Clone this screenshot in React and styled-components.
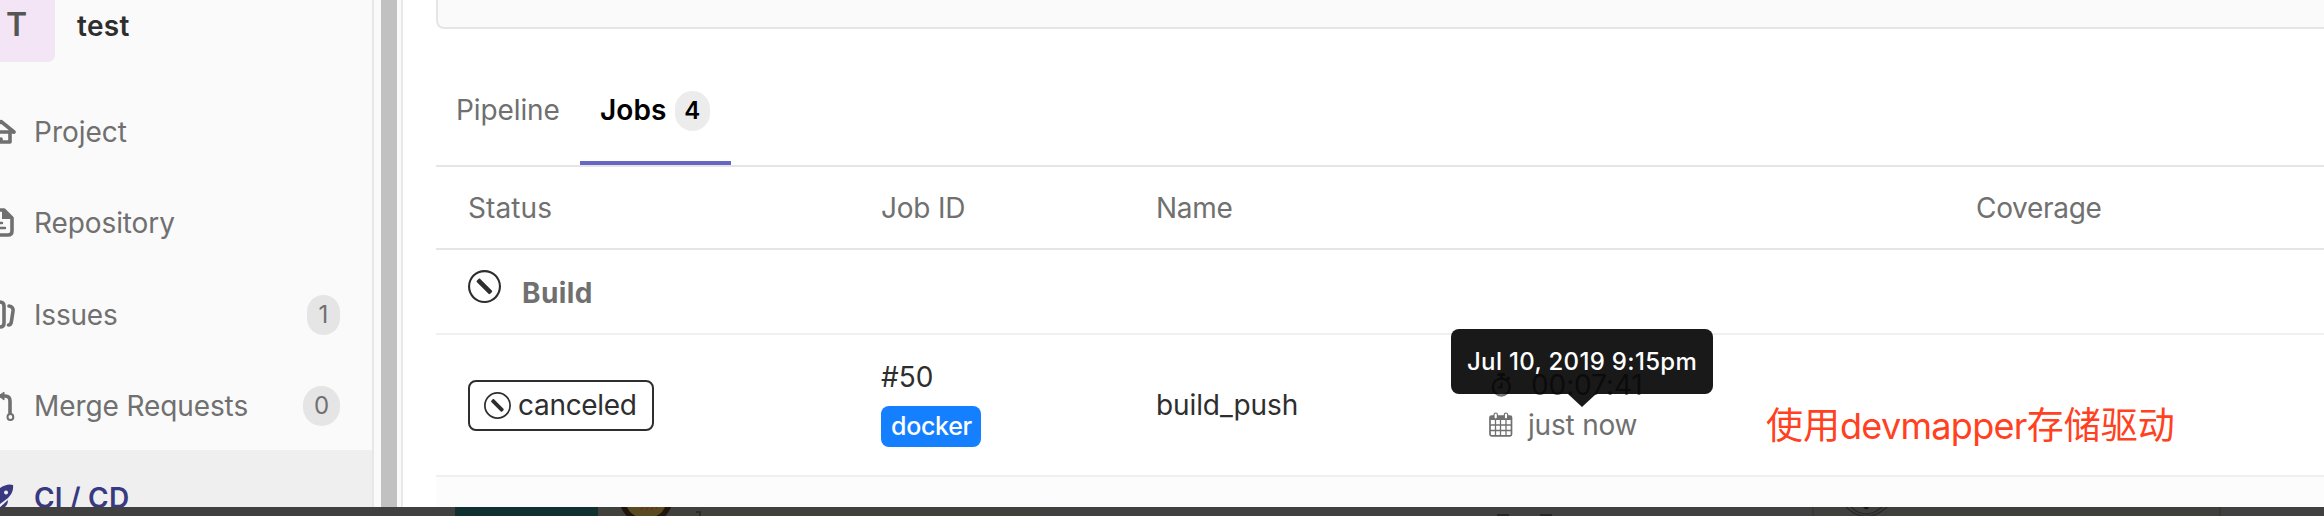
import React from "react";
import styled, { createGlobalStyle } from "styled-components";

const Global = createGlobalStyle`
  * { box-sizing: border-box; }
  body { margin: 0; background: #fff; overflow: hidden; font-family: Inter, "Noto Sans CJK SC", sans-serif; font-size: 28px; line-height: 40px; color: #2e2e2e; }
  svg { display: block; flex: none; }
`;

const Page = styled.div`
  width: 2324px;
  height: 516px;
  display: flex;
  flex-direction: column;
  overflow: hidden;
`;
const Window = styled.div`
  height: 507px;
  display: flex;
  overflow: hidden;
`;
const Text = styled.span`
  display: block;
  white-space: nowrap;
  letter-spacing: ${(p) => p.$ls || 0}px;
`;

const Sidebar = styled.aside`
  width: 374px;
  flex: none;
  background: #fafafa;
  border-right: 2px solid #e7e7e7;
`;
const ProjectHeader = styled.div`
  height: 84px;
  display: flex;
  align-items: flex-start;
  font-weight: 600;
`;
const Avatar = styled.div`
  width: 55px;
  height: 62px;
  padding: 5px 0 0 6px;
  margin-right: 22px;
  background: #f3e5f5;
  border-bottom-right-radius: 7px;
  font-size: 32px;
  font-weight: 600;
  color: #555;
`;
const ProjectName = styled(Text)`
  padding-top: 6px;
`;
const NavItem = styled.div`
  height: 91.5px;
  display: flex;
  align-items: center;
  padding: 4px 32px 0 0;
  color: ${(p) => (p.$active ? "#393982" : "#707070")};
  background: ${(p) => (p.$active ? "#efefef" : "transparent")};
  font-weight: ${(p) => (p.$active ? 600 : 400)};
  svg { margin-right: 10px; }
`;
const Count = styled.span`
  margin-left: auto;
  height: 40px;
  width: ${(p) => p.$w}px;
  border-radius: 20px;
  background: ${(p) => (p.$tab ? "#ececec" : "#e5e5e5")};
  font-size: 24px;
  line-height: 39px;
  text-align: center;
`;

const Scroller = styled.div`
  width: 29px;
  flex: none;
  background: #fafafa;
  border-right: 2px solid #e9e9e9;
  padding: 0 4px 0 7px;
`;
const Thumb = styled.div`
  height: 100%;
  background: #c1c1c1;
`;

const Main = styled.main`
  flex: 1;
  padding-left: 33px;
  background: #fff;
`;
const CommitBox = styled.div`
  height: 29px;
  background: #fafafa;
  border: solid #e5e5e5;
  border-width: 0 0 2px 2px;
  border-bottom-left-radius: 8px;
`;
const Tabs = styled.div`
  height: 138px;
  padding-top: 55px;
  display: flex;
  border-bottom: 2px solid #e5e5e5;
`;
const Tab = styled.div`
  display: flex;
  align-items: center;
  gap: 8px;
  padding: 0 21px 26px 20px;
  width: ${(p) => p.$w}px;
  color: ${(p) => (p.$active ? "#000" : "#707070")};
  font-weight: ${(p) => (p.$active ? 600 : 400)};
  border-bottom: 4px solid ${(p) => (p.$active ? "#6666c4" : "transparent")};
  ${Count} { margin: 2px 0 0 auto; }
`;
const Columns = styled.div`
  display: grid;
  padding-left: 32px;
  align-items: center;
`;
const HeadRow = styled(Columns)`
  grid-template-columns: 413px 275px 330px 490px 1fr;
  height: 83px;
  border-bottom: 2px solid #e5e5e5;
  color: #707070;
`;
const StageRow = styled.div`
  height: 85px;
  display: flex;
  padding: 20px 0 0 32px;
  gap: 21px;
  border-bottom: 2px solid #f0f0f0;
  color: #707070;
  font-weight: 700;
`;
const StageName = styled(Text)`
  padding-top: 3px;
`;
const JobRow = styled(Columns)`
  grid-template-columns: 413px 275px 331px 279px 1fr;
  height: 142px;
  border-bottom: 2px solid #f0f0f0;
`;
const NextRow = styled.div`
  height: 40px;
  background: #fcfcfc;
`;
const StatusBadge = styled.div`
  width: 186px;
  height: 51px;
  display: flex;
  align-items: center;
  gap: 7px;
  padding-left: 14px;
  border: 2px solid #2e2e2e;
  border-radius: 8px;
`;
const JobId = styled.div`
  height: 96px;
`;
const Tag = styled.div`
  width: 100px;
  height: 41px;
  margin-top: 9px;
  padding-left: 10px;
  border-radius: 8px;
  background: #1580ff;
  color: #fff;
  font-size: 25px;
  font-weight: 500;
  line-height: 40px;
`;
const Timing = styled.div`
  position: relative;
  padding: 0 0 1px 2px;
  color: #707070;
`;
const TimeLine = styled.div`
  height: 40px;
  display: flex;
  align-items: center;
  gap: ${(p) => p.$gap}px;
  padding-left: ${(p) => p.$indent || 0}px;
`;
const Tooltip = styled.div`
  position: absolute;
  left: -36px;
  top: -36px;
  width: 262px;
  height: 65px;
  border-radius: 8px;
  background: rgba(0, 0, 0, 0.9);
  color: #fff;
  font-size: 24px;
  font-weight: 500;
  line-height: 65px;
  padding-left: 16px;
  &::after {
    content: "";
    position: absolute;
    left: 117px;
    top: 65px;
    border: 14px solid transparent;
    border-top: 13px solid rgba(0, 0, 0, 0.9);
    border-bottom: 0;
  }
`;
const Note = styled(Text)`
  font-size: 37px;
  line-height: 44px;
  color: #ff4121;
  padding-top: 42px;
`;
const Latin = styled.span`
  font-size: 36px;
  letter-spacing: -0.7px;
`;

const Backdrop = styled.div`
  height: 9px;
  display: flex;
  background: #404040;
`;

const Canceled = ({ size }) => (
  <svg width={size} height={size} viewBox="0 0 14 14" fill="#2e2e2e">
    <path fillRule="evenodd" d="M0 7a7 7 0 1 1 14 0A7 7 0 0 1 0 7zm.9 0a6.1 6.1 0 1 0 12.2 0A6.1 6.1 0 0 0 .9 7z" />
    <path d="M5.2 3.8l4.9 4.9c.2.2.2.5 0 .7l-.7.7c-.2.2-.5.2-.7 0L3.8 5.2c-.2-.2-.2-.5 0-.7l.7-.7c.2-.2.5-.2.7 0" />
  </svg>
);
const NavIcon = ({ children }) => (
  <svg width="24" height="40" viewBox="0 0 24 40" fill="none" stroke="currentColor" strokeWidth="3.6" strokeLinecap="round" strokeLinejoin="round">
    {children}
  </svg>
);
const House = () => (
  <NavIcon>
    <path d="M-12 20 L1 9.500 L14 20 M-10 20H14 M-7 21V30H10V21 M1 30V27" />
  </NavIcon>
);
const Doc = () => (
  <NavIcon>
    <path d="M-10 7H4L12 15V28Q12 32 8 32H-10" />
    <path d="M2 6L13 16H2z" fill="currentColor" stroke="none" />
    <path d="M-6 20H2 M-6 25H5" strokeWidth="2.4" />
  </NavIcon>
);
const IssuesIcon = () => (
  <NavIcon>
    <path d="M-8 7H0Q4 7 4 11V28Q4 32 0 32H-8" />
    <path d="M9 11Q13.500 11.500 13 16L11.500 26Q11 30 8.500 30" />
  </NavIcon>
);
const MergeIcon = () => (
  <NavIcon>
    <path d="M0 10H5Q10 10 10 15V27" />
    <path d="M4 6.500V14L-1 10z" fill="currentColor" strokeWidth="1" />
    <circle cx="10.400" cy="31" r="2.900" strokeWidth="2" />
  </NavIcon>
);
const Rocket = () => (
  <NavIcon>
    <path fillRule="evenodd" stroke="none" fill="currentColor" d="M13 7Q14 14 8 20L0 26L-8 22Q-4 10 5 7.500Q9 6 13 7zM6 12.500a2 2 0 1 0 .1 0z" />
    <path stroke="none" fill="currentColor" d="M8 22Q8 28 2 31H-2z" />
  </NavIcon>
);
const Timer = () => (
  <svg width="21" height="24" viewBox="0 0 21 24" fill="none" stroke="currentColor" strokeWidth="2.4">
    <circle cx="10.300" cy="14" r="8.500" />
    <path d="M6.500 1.500H14 M10.300 2V5 M16 6.500L18.500 4.500" strokeWidth="3" />
    <path d="M10.500 9.500V14.500H7" strokeWidth="2" />
  </svg>
);
const Calendar = () => (
  <svg width="24" height="25" viewBox="0 0 24 25" fill="none" stroke="currentColor">
    <rect x="1" y="4" width="21.500" height="19.800" rx="1.500" strokeWidth="1.700" />
    <path d="M1 4H22.500V8H1z" fill="currentColor" stroke="none" />
    <path d="M6.500 8V23.500M11.500 8V23.500M17 8V23.500M1 13H22M1 18.500H22" strokeWidth="1.300" />
    <rect x="5" y="1" width="3.400" height="6" rx="1.700" fill="#fff" strokeWidth="1.200" />
    <rect x="15.300" y="1" width="3.400" height="6" rx="1.700" fill="#fff" strokeWidth="1.200" />
  </svg>
);
const PageBehind = () => (
  <svg width="2324" height="9" viewBox="0 0 2324 9">
    <rect x="455" y="0" width="143" height="9" fill="#10312f" />
    <path d="M598 0H1047V9H598z" fill="#40403d" />
    <path d="M621 0Q626 15 646 15T671 0z" fill="#20140c" />
    <path d="M627 0Q632 11 646 11T665 0z" fill="#5a4c22" />
    <path d="M641 3l2-3M646 3l2-3M651 3l2-3M656 2l1-2" stroke="#6e2e20" strokeWidth="1.500" />
    <path d="M696 5h4v4" stroke="#262626" strokeWidth="1.500" fill="none" />
    <path d="M1497 8h12M1540 8h12" stroke="#262626" strokeWidth="2" />
    <rect x="1813" width="407" height="9" fill="#3f3f3c" />
    <path d="M1813 0V9M2220 0V9" stroke="#303030" strokeWidth="1" />
    <path d="M1846 0Q1866 19 1887 0M1851 0Q1866 14 1882 0" stroke="#2a2a2a" strokeWidth="1.500" fill="none" />
    <path d="M1863 0h6q-1 3-4 2z" fill="#161616" />
  </svg>
);

const NAV = [
  { label: "Project", Icon: House, ls: 0 },
  { label: "Repository", Icon: Doc, ls: -0.1 },
  { label: "Issues", Icon: IssuesIcon, ls: -0.2, count: "1", w: 33 },
  { label: "Merge Requests", Icon: MergeIcon, ls: -0.1, count: "0", w: 37 },
  { label: "CI / CD", Icon: Rocket, ls: 0.2, active: true },
];

export default function App() {
  return (
    <Page>
      <Global />
      <Window>
        <Sidebar>
          <ProjectHeader>
            <Avatar>T</Avatar>
            <ProjectName $ls={0.3}>test</ProjectName>
          </ProjectHeader>
          {NAV.map(({ label, Icon, ls, count, w, active }) => (
            <NavItem key={label} $active={active}>
              <Icon />
              <Text $ls={ls}>{label}</Text>
              {count && <Count $w={w}>{count}</Count>}
            </NavItem>
          ))}
        </Sidebar>
        <Scroller><Thumb /></Scroller>
        <Main>
          <CommitBox />
          <Tabs>
            <Tab $w={144}><Text $ls={-0.1}>Pipeline</Text></Tab>
            <Tab $w={151} $active>
              <Text $ls={0.1}>Jobs</Text>
              <Count $w={36} $tab>4</Count>
            </Tab>
          </Tabs>
          <HeadRow>
            <Text $ls={0.1}>Status</Text>
            <Text $ls={-0.2}>Job ID</Text>
            <Text $ls={-0.3}>Name</Text>
            <span />
            <Text $ls={-0.3}>Coverage</Text>
          </HeadRow>
          <StageRow>
            <Canceled size={33} />
            <StageName $ls={0.4}>Build</StageName>
          </StageRow>
          <JobRow>
            <StatusBadge>
              <Canceled size={27} />
              <Text $ls={-0.3}>canceled</Text>
            </StatusBadge>
            <JobId>
              <Text>#50</Text>
              <Tag><Text $ls={-0.3}>docker</Text></Tag>
            </JobId>
            <Text $ls={-0.1}>build_push</Text>
            <Timing>
              <TimeLine $gap={19} $indent={2}><Timer /><Text $ls={-0.1}>00:07:41</Text></TimeLine>
              <TimeLine $gap={15}><Calendar /><Text $ls={-0.2}>just now</Text></TimeLine>
              <Tooltip><Text $ls={0.32}>Jul 10, 2019 9:15pm</Text></Tooltip>
            </Timing>
            <Note>使用<Latin>devmapper</Latin>存储驱动</Note>
          </JobRow>
          <NextRow />
        </Main>
      </Window>
      <Backdrop><PageBehind /></Backdrop>
    </Page>
  );
}
